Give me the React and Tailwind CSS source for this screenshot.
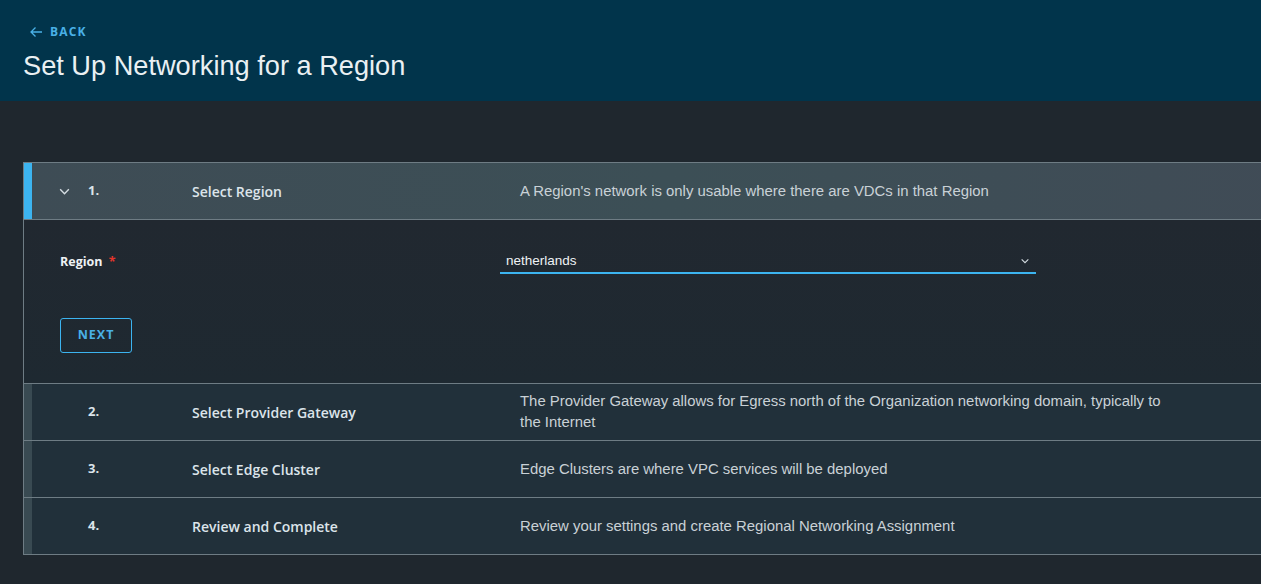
import React from "react";

const Chevron = ({ className }) => (
  <svg className={className} viewBox="0 0 12 12" fill="none" stroke="currentColor" strokeWidth="1.3">
    <path d="M2 4 L6 8 L10 4" />
  </svg>
);

const rows = [
  { n: "2.", t: "Select Provider Gateway", d: "The Provider Gateway allows for Egress north of the Organization networking domain, typically to the Internet" },
  { n: "3.", t: "Select Edge Cluster", d: "Edge Clusters are where VPC services will be deployed" },
  { n: "4.", t: "Review and Complete", d: "Review your settings and create Regional Networking Assignment" },
];

const titleFont = "[font-family:'Open_Sans','Noto_Sans',sans-serif]";

export default function App() {
  return (
    <div className="w-[1261px] h-[584px] overflow-hidden bg-[#1f272e] [font-family:'Liberation_Sans',Arial,sans-serif]">
      <header className="h-[101px] bg-[#01344b] pl-[23px] pt-[22px]">
        <div className="flex items-center gap-[7px] pl-[6px] h-[19px] text-[#49b0e6]">
          <svg width="14" height="12" viewBox="0 0 14 12" fill="none" stroke="currentColor" strokeWidth="1.3">
            <path d="M13 6 H2 M6.5 1.5 L2 6 L6.5 10.5" />
          </svg>
          <span className={`text-[12px] font-bold tracking-[1.2px] ${titleFont}`}>BACK</span>
        </div>
        <h1 className="mt-[9px] text-[27.2px] leading-[32px] text-[#eaf0f3]">Set Up Networking for a Region</h1>
      </header>

      <main className="pt-[61px] pl-[23px]">
        <div className="w-[1300px] border-l border-t border-[#6e7c84]">
          {/* Active step */}
          <div className="flex h-[57px] items-center bg-gradient-to-r from-[#3e4c55] via-[#3c4f56] to-[#404b56] border-b border-[#6e7c84]">
            <div className="w-[8px] h-full bg-[#3cb4f0]" />
            <div className="w-[56px] flex pl-[26px]">
              <Chevron className="w-[13px] h-[13px] text-[#d5dde2]" />
            </div>
            <span className={`w-[104px] text-[13px] font-bold text-[#dce4ea] ${titleFont}`}>1.</span>
            <span className={`w-[328px] text-[14px] font-semibold text-[#dce4ea] ${titleFont}`}>Select Region</span>
            <span className="text-[14.9px] text-[#c9d1d6]">A Region's network is only usable where there are VDCs in that Region</span>
          </div>

          {/* Expanded content */}
          <div className="h-[164px] bg-gradient-to-b from-[#212830] to-[#1e2931] border-b border-[#6e7c84] pl-[36px] pt-[30px]">
            <div className="flex items-start">
              <div className={`w-[440px] pt-[3px] text-[12.5px] font-bold text-[#eef2f5] ${titleFont}`}>
                Region <span className="text-[#e2362c] ml-[3px]">*</span>
              </div>
              <div className="w-[536px] h-[24px] border-b-2 border-[#3cb4f0] flex items-center justify-between pl-[6px] pr-[6px]">
                <span className="text-[13.5px] text-[#eef2f5]">netherlands</span>
                <Chevron className="w-[10px] h-[10px] text-[#d5dde2]" />
              </div>
            </div>
            <button className={`mt-[44px] w-[72px] h-[35px] rounded-[3px] border border-[#3cb4f0] text-[#49b0e6] text-[12.5px] font-bold tracking-[1px] ${titleFont}`}>
              NEXT
            </button>
          </div>

          {rows.map((r) => (
            <div key={r.n} className="flex h-[57px] items-center bg-[#21303a] border-b border-[#6e7c84]">
              <div className="w-[8px] h-full bg-[#394a52]" />
              <div className="w-[56px]" />
              <span className={`w-[104px] text-[13px] font-bold text-[#dce4ea] ${titleFont}`}>{r.n}</span>
              <span className={`w-[328px] text-[14px] font-semibold text-[#dce4ea] ${titleFont}`}>{r.t}</span>
              <span className="w-[655px] text-[14.9px] leading-[21px] text-[#c9d1d6]">{r.d}</span>
            </div>
          ))}
        </div>
      </main>
    </div>
  );
}
